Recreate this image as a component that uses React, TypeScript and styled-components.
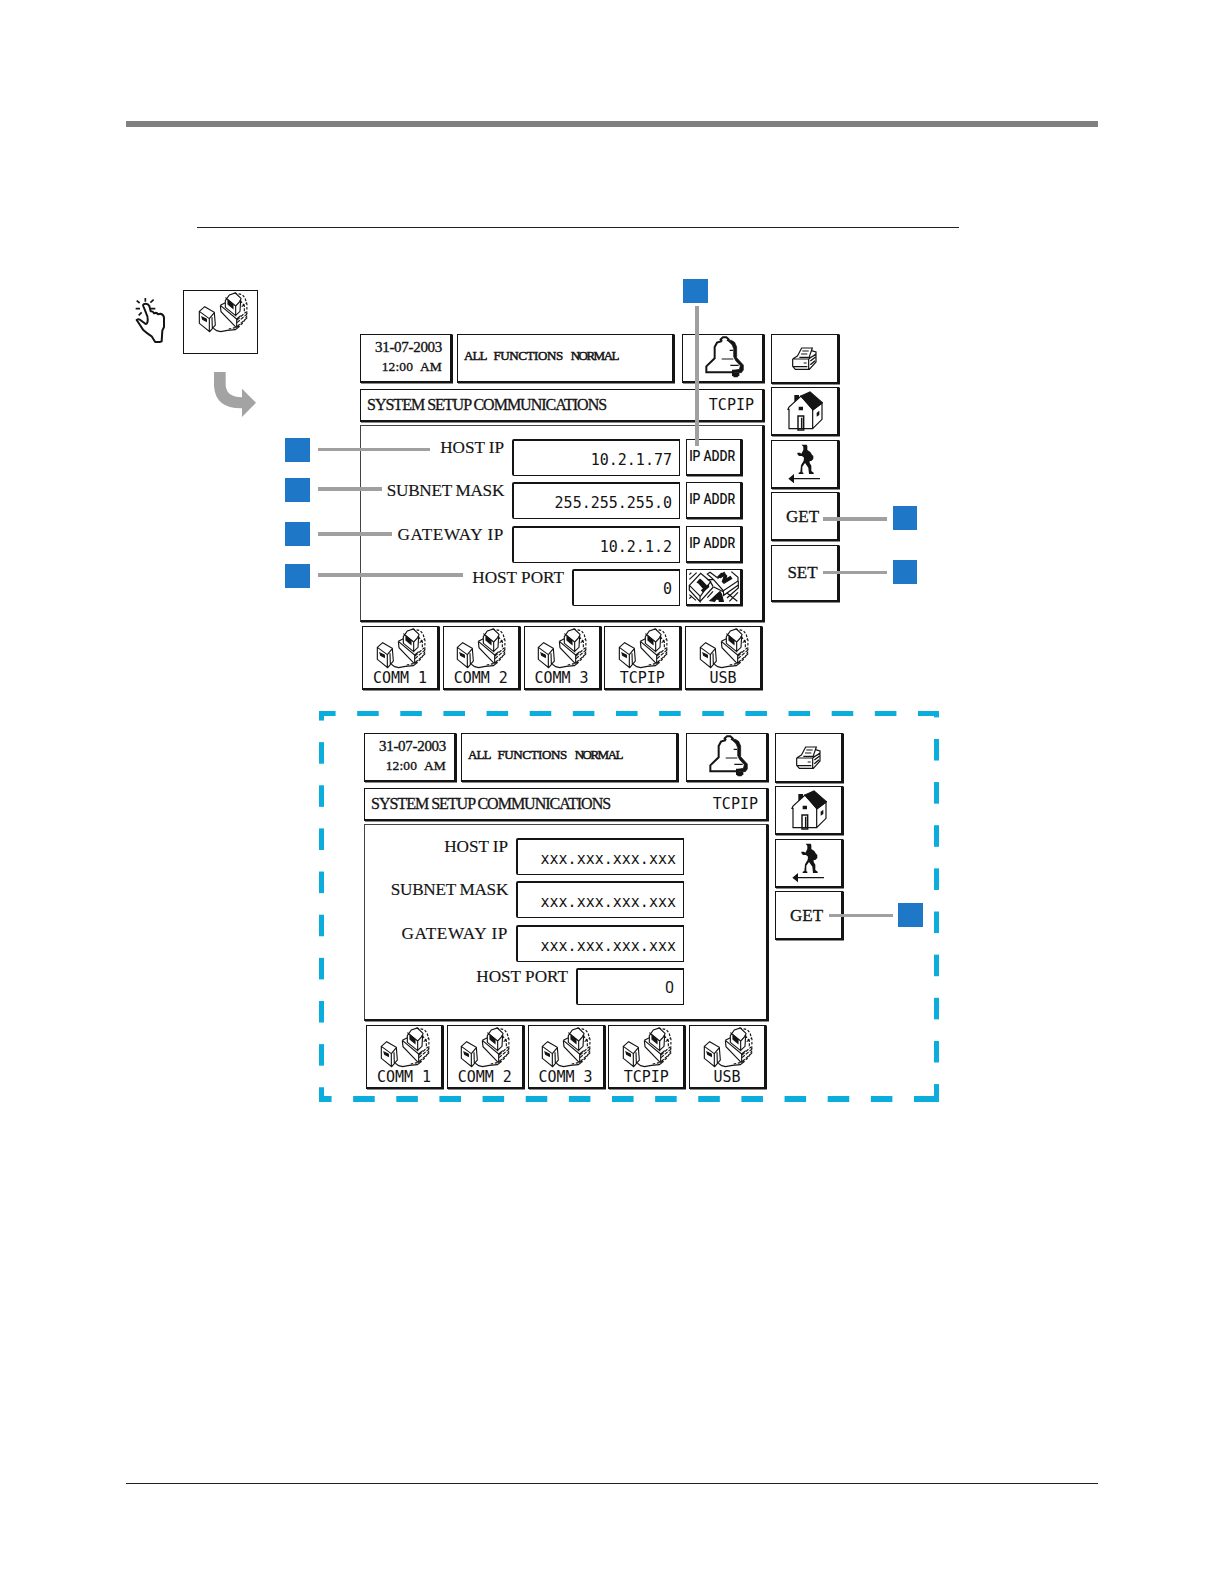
import React from "react";
import styled, { createGlobalStyle } from "styled-components";

const ink = "#141414";
const blue = "#1f77c8";
const cyan = "#0aaddc";
const lead = "#a0a0a0";

const GlobalStyle = createGlobalStyle`
  body {
    margin: 0;
    background: #fff;
    color: ${ink};
  }
  * {
    box-sizing: border-box;
  }
`;

const Page = styled.main`
  width: 1224px;
  height: 1584px;
  padding: 121px 126px 0;
  display: flex;
  flex-direction: column;
  background: #fff;
`;

const HeaderRule = styled.div`
  height: 6px;
  flex: none;
  background: #808080;
`;

const TitleRule = styled.div`
  flex: none;
  width: 762px;
  height: 1px;
  margin: 100px 0 0 71px;
  background: #222;
`;

const FooterRule = styled.div`
  flex: none;
  height: 1px;
  margin: auto 0 100px;
  background: #222;
`;

const Figure = styled.section`
  position: relative;
  display: flex;
  margin-top: 62px;
`;

const Intro = styled.div`
  width: 193px;
  padding: 0 0 0 9px;
`;

const Touch = styled.div`
  display: flex;
  align-items: flex-start;
  gap: 17px;
  > svg {
    margin-top: 7px;
  }
`;

const TouchTarget = styled.div`
  width: 75px;
  height: 64px;
  border: 1px solid ${ink};
  padding: 1px 0 0 14px;
`;

const Turn = styled.div`
  margin: 18px 0 0 79px;
`;

const Screens = styled.div`
  display: flex;
  flex-direction: column;
  padding-top: 44px;
`;

const Screen = styled.div`
  display: flex;
  gap: 6px;
  margin-left: 41px;
`;

const DashedFrame = styled.div`
  width: 620px;
  height: 391px;
  margin-top: 21px;
  padding: 22px 0 0 4px;
  background-image: linear-gradient(90deg, ${cyan} 50%, transparent 50%),
    linear-gradient(90deg, ${cyan} 50%, transparent 50%),
    linear-gradient(${cyan} 50%, transparent 50%),
    linear-gradient(${cyan} 50%, transparent 50%);
  background-size: 43.15px 5px, 43.15px 6px, 5px 43.15px, 5px 43.15px;
  background-repeat: repeat-x, repeat-x, repeat-y, repeat-y;
  background-position: -5px 0, -9px 100%, 0 -12px, 100% -15.2px;
`;

const Main = styled.div`
  width: 405px;
  display: flex;
  flex-direction: column;
`;

const Box = styled.div`
  background: #fff;
  border: 1px solid ${ink};
  border-bottom-width: 2px;
  border-right-width: 2px;
  box-shadow: 1px 0.5px 0 ${ink};
`;

const TopRow = styled.div`
  display: flex;
  height: 49px;
`;

const Clock = styled(Box)`
  width: 92px;
  margin-right: 5px;
  padding: 2px 8px 0 0;
  text-align: right;
  font: 14px/20px "Liberation Serif", serif;
  -webkit-text-stroke: 0.35px ${ink};
  white-space: pre;
`;

const DateLine = styled.div`
  font-size: 15px;
  letter-spacing: -0.3px;
`;

const TimeLine = styled.div`
  font-size: 13.5px;
  letter-spacing: 0.15px;
  word-spacing: 4px;
`;

const Status = styled(Box)`
  width: 217px;
  margin-right: 8px;
  padding: 11px 0 0 6px;
  font: 13px/20px "Liberation Serif", serif;
  white-space: pre;
  -webkit-text-stroke: 0.5px ${ink};
`;

const StatusWord = styled.span<{ $track: number }>`
  letter-spacing: ${(p) => p.$track}px;
  & + & {
    margin-left: 5px;
  }
`;

const Alarm = styled(Box)`
  width: 82px;
  padding: 1px 0 0 22px;
`;

const TitleBar = styled(Box)`
  display: flex;
  justify-content: space-between;
  width: 404px;
  height: 33px;
  margin-top: 6px;
  padding: 4px 8px 0 6px;
  font: 16px/22px "Liberation Serif", serif;
  letter-spacing: -1px;
  -webkit-text-stroke: 0.3px ${ink};
`;

const TitleTag = styled.span`
  padding-top: 1px;
  font: 15px/20px "DejaVu Sans Mono", monospace;
  letter-spacing: 0;
  -webkit-text-stroke: 0;
`;

const Form = styled(Box)`
  width: 404px;
  height: 197px;
  margin-top: 3px;
  padding: 13px 20px 0 0;
  border-left-color: #444;
  border-top-color: #444;
`;

const Row = styled.div`
  display: flex;
  height: 43.4px;
`;

const Label = styled.div<{ $track: number }>`
  flex: 1;
  padding-right: 8px;
  text-align: right;
  font: 17.2px/18px "Liberation Serif", serif;
  letter-spacing: ${(p) => p.$track}px;
  -webkit-text-stroke: 0.15px ${ink};
`;

const Field = styled.div<{ $short?: boolean }>`
  width: ${(p) => (p.$short ? 108 : 168)}px;
  height: 37px;
  margin-right: 6px;
  padding: ${(p) => (p.$short ? 9 : 10)}px 7px 0 0;
  border: 1px solid ${ink};
  border-top-width: 2px;
  border-left-width: 2px;
  border-radius: 2px 0 0 2px;
  text-align: right;
  font: 15px/18px "DejaVu Sans Mono", monospace;
`;

const EmptyPort = styled.span`
  padding-right: 2px;
  font: 16px/18px Roboto, sans-serif;
`;

const EntryButton = styled(Box)`
  width: 56px;
  height: 37px;
  display: flex;
  justify-content: center;
  padding: 8px 2px 0 0;
  font: 500 15.5px/16px Roboto, sans-serif;
  white-space: nowrap;
  span {
    flex: none;
    transform: scaleX(0.79);
  }
`;

const KeysButton = styled(EntryButton)`
  padding: 1px 0 0;
`;

const Blank = styled.div`
  width: 56px;
`;

const PortRow = styled.div`
  display: flex;
  justify-content: space-between;
  width: 402px;
  margin-top: 4px;
  padding: 0 0 0 2px;
`;

const Port = styled(Box)`
  width: 77px;
  height: 64px;
  display: flex;
  flex-direction: column;
  align-items: center;
  padding-top: 1px;
  font: 15px/18px "DejaVu Sans Mono", monospace;
  svg {
    flex: none;
    margin-left: 2px;
  }
`;

const Side = styled.div`
  width: 68px;
  display: flex;
  flex-direction: column;
  gap: 3.4px;
`;

const SideButton = styled(Box)<{ $h?: number }>`
  flex: none;
  height: ${(p) => p.$h || 49}px;
  display: flex;
  justify-content: center;
  align-items: center;
`;

const SideText = styled.span`
  padding: 1px 4px 0 0;
  font: 17px/20px "Liberation Serif", serif;
  -webkit-text-stroke: 0.3px ${ink};
`;

// pins and their leader lines float over the screens
const Pin = styled.i<{ $x: number; $y: number; $w?: number }>`
  position: absolute;
  left: ${(p) => p.$x}px;
  top: ${(p) => p.$y}px;
  width: ${(p) => p.$w || 25}px;
  height: 24px;
  background: ${blue};
`;

const Leader = styled.i<{ $x: number; $y: number; $w: number; $h: number }>`
  position: absolute;
  left: ${(p) => p.$x}px;
  top: ${(p) => p.$y}px;
  width: ${(p) => p.$w}px;
  height: ${(p) => p.$h}px;
  background: ${lead};
`;

function HandIcon() {
  return (
    <svg width="31" height="46" viewBox="75 78 93 138" fill="none" stroke={ink} strokeWidth="6" strokeLinejoin="round">
      <path d="M101 108q-5-9 5-10q8-1 12 7l4 16q7-1 10 6q8-4 12 3l8-2q11 3 10 15v25l-5 11l-2 32q-9 4-20 1l-10-16q-14-9-26-20l-11-17l-8-12q6-5 14 2l10 8q7 6 9-7q1-14-4-22l-8-20" />
      <path d="M106 81v11M80 89l9 7M131 86l-10 9M77 113h13M123 113h13M95 124l-9 9" strokeWidth="5" />
    </svg>
  );
}

function TurnIcon() {
  return (
    <svg width="42" height="45" viewBox="0 0 126 135">
      <path d="M0 0h35v40q3 36 49 36V50l42 42l-42 43v-26Q4 110 0 42z" fill="#a3a3a3" />
    </svg>
  );
}

function TerminalsIcon() {
  return (
    <svg width="51" height="41" viewBox="263 66 153 123" fill="none" stroke={ink} strokeWidth="3.4">
      <path d="M267 124l16-14l29 17l3 38l-17 20l-31-25zM267 124l30 22v40M297 146l15-18M305 142l1 32" />
      <path d="M275 141l13 6v7l-11-6z" fill={ink} />
      <path d="M345 92l12-17l18-6l17 16l-2 8l-14 15v29l-31-25zM345 83l31 25M376 136l13-12l2-34" />
      <path d="M353 90l15 13v12l-15-12z" fill={ink} />
      <path d="M330 106l15-8M330 106l49 41v26M330 106l2 19l46 48M379 147l12-10" />
      <path d="M372 69l24 5l8 10l6 20l-1 35l-11 20l-18 13l-25 5" strokeDasharray="8 5" />
      <path d="M380 158l31-27M380 170l31-27M394 110l16-12M388 90l14 17v17M380 150l27-24" strokeDasharray="11 4" />
      <path d="M309 175l10 7l12 3l20-4l24-2l13-10" />
    </svg>
  );
}

function BellIcon() {
  return (
    <svg width="39" height="42" viewBox="92 35 117 126" fill="none" stroke={ink} strokeWidth="6">
      <path d="M143 50l-4-5l7-6h10l7 6l-4 5M143 50l-15 5l-7 13v34l-25 24v18h80v-5h18" />
      <path d="M159 48h12l10 6l6 14v32l20 22v15l-6 8h-26v-6l20-4l3-11l-14-15l-6-12V73l-5-12z" fill={ink} strokeWidth="2" />
      <path d="M173 145h22v8l-6 6h-10l-6-6z" fill={ink} stroke="none" />
      <path d="M142 104h35M168 123h25M166 78h10" strokeWidth="3.4" />
    </svg>
  );
}

function PrinterIcon() {
  return (
    <svg width="26" height="23" viewBox="354 65 78 69" fill="none" stroke={ink} strokeWidth="3.6">
      <path d="M370 93l13-25h32l-9 26M385 77h19M381 86h19M356 101l14-9M356 101h48l22-15M356 101v22l8 9h42l20-22v-24M404 101v30M389 113h9M358 124h42M412 76l14 4v8l-16 8h-34" />
      <path d="M409 107l16-12M409 118l14-12" strokeWidth="4" />
    </svg>
  );
}

function HouseIcon() {
  return (
    <svg width="36" height="40" viewBox="341 200 108 120" fill="none" stroke={ink} strokeWidth="3.6">
      <path d="M343 257l4-9l36-33l35 39v59h-71v-60M418 313l28-28v-49l-28 20" />
      <path d="M383 215l27-12l37 32l-28 22z" fill={ink} />
      <path d="M363 212h14v9l-14 13zM376 247h13v11h-13z" fill={ink} stroke="none" />
      <path d="M374 317v-42h17v42zM385 280v32" strokeWidth="4.4" />
      <path d="M430 265l8-6v13l-8 5z" fill={ink} stroke="none" />
    </svg>
  );
}

function WalkIcon() {
  return (
    <svg width="33" height="40" viewBox="344 356 99 120" fill={ink}>
      <path d="M385 358h15l2 4v12l9 6l5 8l4 4v9l-6 6h-5v6l5 8v16l7 5v4h-14l-2-19l-10-14l-8 11v17l3 1v4h-14v-4l5-2l2-20l8-14l1-9l-6-5h-9l-5-6v-4h8l4 3l6-11v-10l-4-4z" />
      <path d="M345 460l17-14v12h78v4h-78v12z" />
    </svg>
  );
}

function KeysIcon() {
  return (
    <svg width="52" height="32" viewBox="382 17 156 96" fill="none" stroke={ink} strokeWidth="3.6">
      <path d="M386 60l34-36l30 25l-31 44zM386 60v14l32 35v-16M418 109l40-44M449 49l8 14M386 42l22-20M386 28l6-6" />
      <path d="M458 42l30 34l44-29V36l-20-17M458 42l-18-16l8-5l24 18l20-19M488 76l1 14l44-31M533 48v20l-34 30M440 43l18-1M458 64l30 15M506 108l26-27M500 84l30 24M386 88l20 17M386 100l8-8M440 97l17-19" />
      <path d="M410 51l8-9l5 4l15 16l5-3l1 5l-17 15l-4-4l6-5l-14-16z" fill={ink} />
      <path d="M472 34l10-10h8l8 8l-3 10l14-8l4 6l-23 14l-5-5l7-21l-12 9z" fill={ink} />
      <path d="M448 106l22-20l8-7l5 9l5 20h-12l-1-6l-9-1l-4 7z" fill={ink} />
    </svg>
  );
}

const ports = ["COMM 1", "COMM 2", "COMM 3", "TCPIP", "USB"];

const rows = [
  { label: "HOST IP", track: -0.05 },
  { label: "SUBNET MASK", track: -0.3 },
  { label: "GATEWAY IP", track: 0.6 },
  { label: "HOST PORT", track: 0 },
];

interface ScreenProps {
  values: string[];
  editable?: boolean;
}

function SetupScreen({ values, editable }: ScreenProps) {
  return (
    <Screen>
      <Main>
        <TopRow>
          <Clock>
            <DateLine>31-07-2003</DateLine>
            <TimeLine>12:00 AM</TimeLine>
          </Clock>
          <Status>
            <StatusWord $track={-0.9}>ALL </StatusWord>
            <StatusWord $track={-0.4}>FUNCTIONS </StatusWord>
            <StatusWord $track={-1.5}>NORMAL</StatusWord>
          </Status>
          <Alarm>
            <BellIcon />
          </Alarm>
        </TopRow>
        <TitleBar>
          SYSTEM SETUP COMMUNICATIONS
          <TitleTag>TCPIP</TitleTag>
        </TitleBar>
        <Form>
          {rows.map(({ label, track }, i) => (
            <Row key={label}>
              <Label $track={track}>{label}</Label>
              <Field $short={i === 3}>
                {i === 3 && !editable ? <EmptyPort>{values[i]}</EmptyPort> : values[i]}
              </Field>
              {!editable && <Blank />}
              {editable && i < 3 && (
                <EntryButton>
                  <span>IP ADDR</span>
                </EntryButton>
              )}
              {editable && i === 3 && (
                <KeysButton>
                  <KeysIcon />
                </KeysButton>
              )}
            </Row>
          ))}
        </Form>
        <PortRow>
          {ports.map((port) => (
            <Port key={port}>
              <TerminalsIcon />
              {port}
            </Port>
          ))}
        </PortRow>
      </Main>
      <Side>
        <SideButton $h={50}>
          <PrinterIcon />
        </SideButton>
        <SideButton>
          <HouseIcon />
        </SideButton>
        <SideButton>
          <WalkIcon />
        </SideButton>
        <SideButton>
          <SideText>GET</SideText>
        </SideButton>
        {editable && (
          <SideButton $h={57}>
            <SideText>SET</SideText>
          </SideButton>
        )}
      </Side>
    </Screen>
  );
}

export default function App() {
  return (
    <>
      <GlobalStyle />
      <Page>
        <HeaderRule />
        <TitleRule />
        <Figure>
          <Intro>
            <Touch>
              <HandIcon />
              <TouchTarget>
                <TerminalsIcon />
              </TouchTarget>
            </Touch>
            <Turn>
              <TurnIcon />
            </Turn>
          </Intro>
          <Screens>
            <SetupScreen editable values={["10.2.1.77", "255.255.255.0", "10.2.1.2", "0"]} />
            <DashedFrame>
              <SetupScreen values={["xxx.xxx.xxx.xxx", "xxx.xxx.xxx.xxx", "xxx.xxx.xxx.xxx", "0"]} />
            </DashedFrame>
          </Screens>
          <Pin $x={557} $y={-11} />
          <Leader $x={569} $y={16} $w={4} $h={140} />
          <Pin $x={159} $y={148} />
          <Leader $x={192} $y={158} $w={112} $h={3} />
          <Pin $x={159} $y={188} />
          <Leader $x={192} $y={197} $w={64} $h={4} />
          <Pin $x={159} $y={232} />
          <Leader $x={192} $y={242} $w={74} $h={4} />
          <Pin $x={159} $y={274} />
          <Leader $x={192} $y={283} $w={145} $h={4} />
          <Pin $x={767} $y={216} $w={24} />
          <Leader $x={697} $y={227} $w={64} $h={4} />
          <Pin $x={767} $y={270} $w={24} />
          <Leader $x={697} $y={281} $w={64} $h={3} />
          <Pin $x={772} $y={613} />
          <Leader $x={703} $y={624} $w={64} $h={3} />
        </Figure>
        <FooterRule />
      </Page>
    </>
  );
}
